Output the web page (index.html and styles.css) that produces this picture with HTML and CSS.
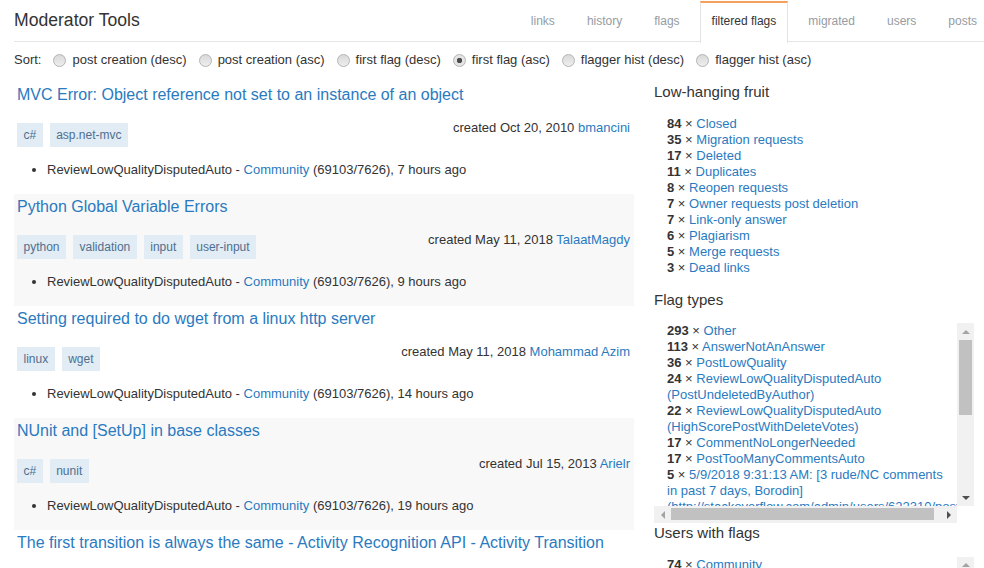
FILE: index.html
```html
<!DOCTYPE html>
<html lang="en">
<head>
<meta charset="utf-8">
<title>Moderator Tools - filtered flags</title>
<link rel="stylesheet" href="styles.css">
</head>
<body>
<header class="topbar">
  <h1 class="brand">Moderator Tools</h1>
  <nav class="tabs">
    <a class="tab" href="#">links</a>
    <a class="tab" href="#">history</a>
    <a class="tab" href="#">flags</a>
    <a class="tab tab-active" href="#">filtered flags</a>
    <a class="tab" href="#">migrated</a>
    <a class="tab" href="#">users</a>
    <a class="tab" href="#">posts</a>
  </nav>
</header>

<form class="sortbar">
  <span class="sort-label">Sort:</span>
  <label class="sort-opt"><input type="radio" name="sort"> post creation (desc)</label>
  <label class="sort-opt"><input type="radio" name="sort"> post creation (asc)</label>
  <label class="sort-opt"><input type="radio" name="sort"> first flag (desc)</label>
  <label class="sort-opt"><input type="radio" name="sort" checked> first flag (asc)</label>
  <label class="sort-opt"><input type="radio" name="sort"> flagger hist (desc)</label>
  <label class="sort-opt"><input type="radio" name="sort"> flagger hist (asc)</label>
</form>

<div class="layout">
  <main class="posts">
    <article class="post">
      <h2 class="post-title"><a href="#">MVC Error: Object reference not set to an instance of an object</a></h2>
      <div class="post-meta">
        <div class="tags"><span class="tag">c#</span><span class="tag">asp.net-mvc</span></div>
        <div class="created">created Oct 20, 2010 <a href="#">bmancini</a></div>
      </div>
      <ul class="flag-list">
        <li>ReviewLowQualityDisputedAuto - <a href="#">Community</a> (69103/7626), 7 hours ago</li>
      </ul>
    </article>

    <article class="post">
      <h2 class="post-title"><a href="#">Python Global Variable Errors</a></h2>
      <div class="post-meta">
        <div class="tags"><span class="tag">python</span><span class="tag">validation</span><span class="tag">input</span><span class="tag">user-input</span></div>
        <div class="created">created May 11, 2018 <a href="#">TalaatMagdy</a></div>
      </div>
      <ul class="flag-list">
        <li>ReviewLowQualityDisputedAuto - <a href="#">Community</a> (69103/7626), 9 hours ago</li>
      </ul>
    </article>

    <article class="post">
      <h2 class="post-title"><a href="#">Setting required to do wget from a linux http server</a></h2>
      <div class="post-meta">
        <div class="tags"><span class="tag">linux</span><span class="tag">wget</span></div>
        <div class="created">created May 11, 2018 <a href="#">Mohammad Azim</a></div>
      </div>
      <ul class="flag-list">
        <li>ReviewLowQualityDisputedAuto - <a href="#">Community</a> (69103/7626), 14 hours ago</li>
      </ul>
    </article>

    <article class="post">
      <h2 class="post-title"><a href="#">NUnit and [SetUp] in base classes</a></h2>
      <div class="post-meta">
        <div class="tags"><span class="tag">c#</span><span class="tag">nunit</span></div>
        <div class="created">created Jul 15, 2013 <a href="#">Arielr</a></div>
      </div>
      <ul class="flag-list">
        <li>ReviewLowQualityDisputedAuto - <a href="#">Community</a> (69103/7626), 19 hours ago</li>
      </ul>
    </article>

    <article class="post">
      <h2 class="post-title"><a href="#">The first transition is always the same - Activity Recognition API - Activity Transition</a></h2>
    </article>
  </main>

  <aside class="sidebar">
    <h3 class="side-heading">Low-hanging fruit</h3>
    <ul class="stat-list">
      <li><b>84</b> × <a href="#">Closed</a></li>
      <li><b>35</b> × <a href="#">Migration requests</a></li>
      <li><b>17</b> × <a href="#">Deleted</a></li>
      <li><b>11</b> × <a href="#">Duplicates</a></li>
      <li><b>8</b> × <a href="#">Reopen requests</a></li>
      <li><b>7</b> × <a href="#">Owner requests post deletion</a></li>
      <li><b>7</b> × <a href="#">Link-only answer</a></li>
      <li><b>6</b> × <a href="#">Plagiarism</a></li>
      <li><b>5</b> × <a href="#">Merge requests</a></li>
      <li><b>3</b> × <a href="#">Dead links</a></li>
    </ul>

    <h3 class="side-heading">Flag types</h3>
    <div class="scrollbox">
      <div class="scroll-content">
        <ul class="stat-list stat-list-scroll">
          <li><b>293</b> × <a href="#">Other</a></li>
          <li><b>113</b> × <a href="#">AnswerNotAnAnswer</a></li>
          <li><b>36</b> × <a href="#">PostLowQuality</a></li>
          <li><b>24</b> × <a href="#">ReviewLowQualityDisputedAuto (PostUndeletedByAuthor)</a></li>
          <li><b>22</b> × <a href="#">ReviewLowQualityDisputedAuto (HighScorePostWithDeleteVotes)</a></li>
          <li><b>17</b> × <a href="#">CommentNoLongerNeeded</a></li>
          <li><b>17</b> × <a href="#">PostTooManyCommentsAuto</a></li>
          <li><b>5</b> × <a href="#">5/9/2018 9:31:13 AM: [3 rude/NC comments in past 7 days, Borodin](http://stackoverflow.com/admin/users/622310/post-comments)</a></li>
        </ul>
      </div>
      <div class="vbar">
        <span class="sb-btn"><svg width="8" height="4" viewBox="0 0 8 4"><path d="M0 4L4 0L8 4Z" fill="#a3a3a3"/></svg></span>
        <span class="sb-track"><span class="sb-thumb sb-thumb-v"></span></span>
        <span class="sb-btn"><svg width="8" height="4" viewBox="0 0 8 4"><path d="M0 0L8 0L4 4Z" fill="#505050"/></svg></span>
      </div>
      <div class="hbar">
        <span class="sb-btn"><svg width="4" height="8" viewBox="0 0 4 8"><path d="M4 0L4 8L0 4Z" fill="#a3a3a3"/></svg></span>
        <span class="sb-track"><span class="sb-thumb sb-thumb-h"></span></span>
        <span class="sb-btn"><svg width="4" height="8" viewBox="0 0 4 8"><path d="M0 0L4 4L0 8Z" fill="#505050"/></svg></span>
      </div>
      <div class="sb-corner"></div>
    </div>

    <h3 class="side-heading">Users with flags</h3>
    <div class="scrollbox scrollbox-users">
      <div class="scroll-content">
        <ul class="stat-list stat-list-scroll">
          <li><b>74</b> × <a href="#">Community</a></li>
        </ul>
      </div>
      <div class="vbar">
        <span class="sb-btn"><svg width="8" height="4" viewBox="0 0 8 4"><path d="M0 4L4 0L8 4Z" fill="#a3a3a3"/></svg></span>
        <span class="sb-track"><span class="sb-thumb sb-thumb-v"></span></span>
        <span class="sb-btn"><svg width="8" height="4" viewBox="0 0 8 4"><path d="M0 0L8 0L4 4Z" fill="#505050"/></svg></span>
      </div>
    </div>
  </aside>
</div>
</body>
</html>
```

FILE: styles.css
```css
html, body {
  overflow: hidden;
}

body {
  margin: 0;
  font-family: "Liberation Sans", Arial, sans-serif;
  font-size: 13px;
  color: #333;
  background: #fff;
}

a {
  color: #2a7ac0;
  text-decoration: none;
}

/* ---------- top bar ---------- */
.topbar {
  display: flex;
  justify-content: space-between;
  align-items: flex-start;
  height: 41px;
  margin: 0 -5px 0 14px;
  border-bottom: 1px solid #e5e5e5;
}

.brand {
  margin: 10px 0 0;
  font-size: 17.6px;
  line-height: 20px;
  font-weight: normal;
  color: #333;
}

.tabs {
  display: flex;
  gap: 8px;
  margin-top: 1px;
}

.tab {
  display: block;
  padding: 11px 11px 14px;
  border-top: 2px solid transparent;
  border-left: 1px solid transparent;
  border-right: 1px solid transparent;
  font-size: 12px;
  line-height: 14px;
  color: #959ca3;
  background: transparent;
}

.tab-active {
  color: #333;
  background: #fff;
  border-top-color: #f5a05a;
  border-left-color: #e3e3e3;
  border-right-color: #e3e3e3;
  padding-bottom: 15px;
}

/* ---------- sort options ---------- */
.sortbar {
  display: flex;
  align-items: center;
  margin: 0;
  padding: 9px 14px 13px;
  line-height: 18px;
}

.sort-opt {
  display: flex;
  align-items: center;
  margin-left: 12px;
}

.sort-opt input {
  appearance: none;
  -webkit-appearance: none;
  width: 13px;
  height: 13px;
  margin: 0 6px 0 0;
  border: 1px solid #b4b4b4;
  border-radius: 50%;
  background: linear-gradient(#d9d9d9, #eeeeee);
}

.sort-opt input:checked {
  background: radial-gradient(circle, #4d4d4d 0 2.4px, #e4e4e4 3px);
}

/* ---------- main layout ---------- */
.layout {
  display: flex;
  align-items: flex-start;
  gap: 20px;
  padding-left: 14px;
}

.posts {
  width: 620px;
  flex: none;
}

.post {
  padding: 3px 4px 15px 3px;
}

.post:nth-child(even) {
  background: #f8f8f8;
}

.post-title {
  margin: 0;
  font-size: 16px;
  line-height: 20px;
  font-weight: normal;
  white-space: nowrap;
}

.post-meta {
  display: flex;
  justify-content: space-between;
  align-items: flex-start;
  margin-top: 14px;
}

.tags {
  display: flex;
  gap: 7px;
  margin-top: 4px;
}

.tag {
  padding: 0 6.5px;
  font-size: 12px;
  line-height: 24px;
  color: #4f6f8f;
  background: #e1ecf4;
}

.created {
  line-height: 18px;
}

.flag-list {
  margin: 14px 0 0;
  padding-left: 30px;
  line-height: 18px;
}

/* ---------- sidebar ---------- */
.sidebar {
  width: 320px;
  flex: none;
}

.side-heading {
  margin: 0 0 13.5px;
  font-size: 15px;
  line-height: 20px;
  font-weight: normal;
  color: #333;
}

.stat-list {
  list-style: none;
  margin: 0 0 14px;
  padding: 0 0 0 13px;
  line-height: 16px;
}

.stat-list b {
  color: #333;
}

/* boxed list with classic scrollbars */
.scrollbox {
  display: grid;
  grid-template-columns: 303px 17px;
  grid-template-rows: 183px 17px;
}

.scrollbox-users {
  grid-template-rows: 200px;
}

.scroll-content {
  overflow: hidden;
}

.stat-list-scroll {
  margin: 0;
  padding-right: 8px;
}

.vbar,
.hbar {
  display: flex;
  background: #f1f1f1;
}

.vbar {
  flex-direction: column;
}

.sb-btn {
  flex: none;
  display: flex;
  align-items: center;
  justify-content: center;
  width: 17px;
  height: 17px;
}

.sb-btn svg {
  display: block;
}

.sb-track {
  flex: 1;
  display: flex;
}

.vbar .sb-track {
  flex-direction: column;
  padding: 0 2px;
}

.hbar .sb-track {
  padding: 2px 0 3px;
}

.sb-thumb {
  background: #c1c1c1;
}

.sb-thumb-v {
  height: 75px;
}

.sb-thumb-h {
  width: 263px;
}

.sb-corner {
  background: #fff;
}
```
